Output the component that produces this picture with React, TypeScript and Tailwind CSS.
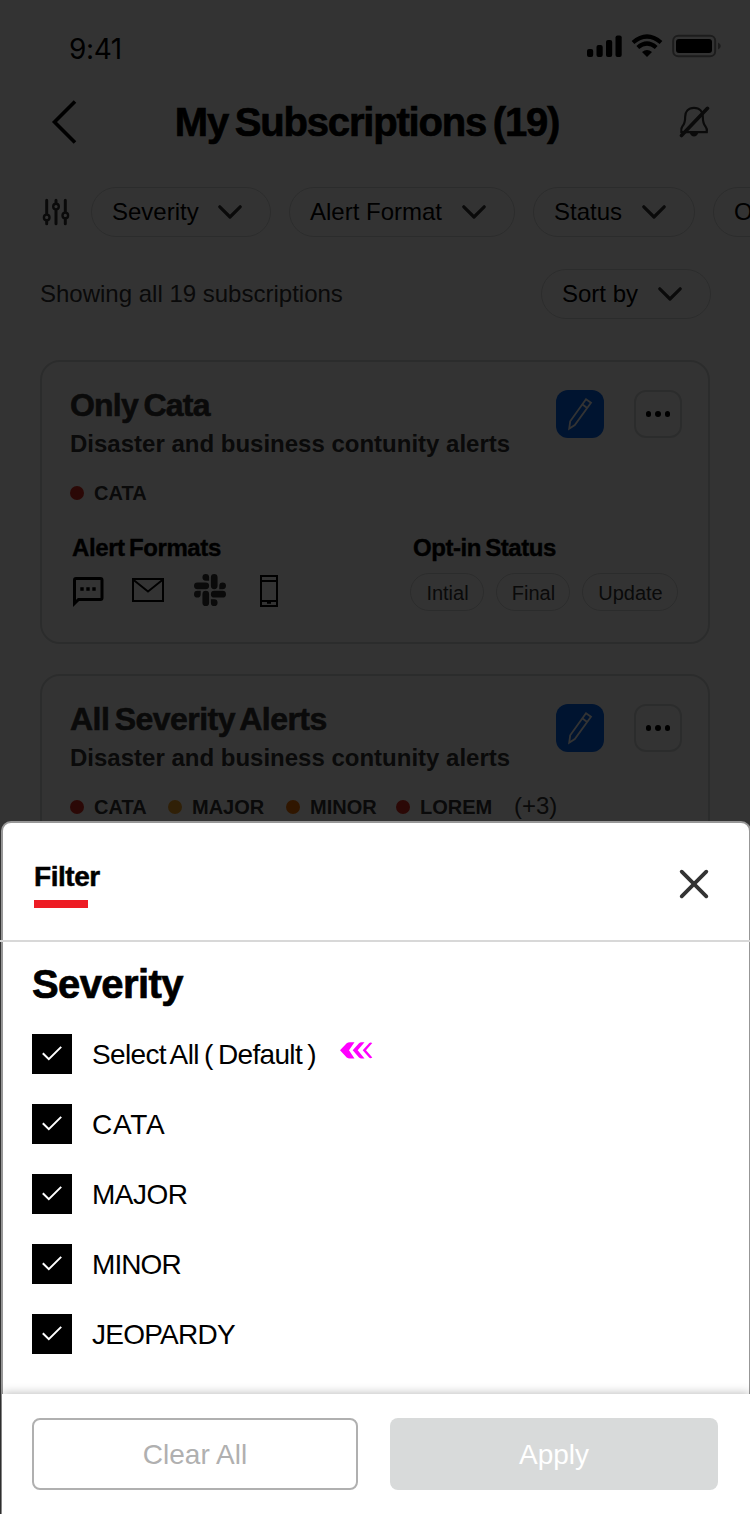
import type { ReactNode } from "react";

function Chevron() {
  return (
    <svg width="24" height="14" viewBox="0 0 24 14" className="shrink-0" fill="none" stroke="#333" strokeWidth="3.2" strokeLinecap="round" strokeLinejoin="round">
      <path d="M1.8 1.8 12 12 22.2 1.8" />
    </svg>
  );
}

function Pill({ label, className }: { label: string; className: string }) {
  return (
    <button className={`flex h-[50px] shrink-0 items-center justify-between rounded-full border border-[#d8dada] pr-7 pl-5 text-2xl whitespace-nowrap text-black ${className}`}>
      <span>{label}</span>
      <Chevron />
    </button>
  );
}

function StatusBar() {
  return (
    <div className="flex h-[72px] items-start justify-between pt-[34px] pr-[29px] pl-[69px]">
      <span className="font-['Inter'] text-[28px] leading-[31px] tracking-[-0.4px]">9:41</span>
      <svg width="134" height="24" viewBox="587 34 134 24">
        <rect x="587" y="49" width="6.2" height="8" rx="2" />
        <rect x="596.5" y="45" width="6.2" height="12" rx="2" />
        <rect x="606" y="40" width="6.2" height="17" rx="2" />
        <rect x="615.5" y="35.5" width="6.2" height="21.5" rx="2" />
        <path d="M633 42.5Q647 30.5 661 42.5" fill="none" stroke="#000" strokeWidth="4.2" />
        <path d="M637.8 47.5Q647 39.5 656.2 47.5" fill="none" stroke="#000" strokeWidth="4.2" />
        <path d="M642 52Q647 48 652 52L647 57Z" />
        <rect x="673.2" y="35.8" width="42" height="20.4" rx="5" fill="none" stroke="#8c8c8c" strokeWidth="2" />
        <rect x="676" y="39" width="36" height="14" rx="3" />
        <path d="M718 42.5Q720.8 43.5 720.8 46T718 49.5Z" fill="#8c8c8c" />
      </svg>
    </div>
  );
}

function Header() {
  return (
    <div className="flex h-[100px] items-center justify-between pr-[39px] pl-[51px]">
      <svg width="26" height="46" viewBox="0 0 26 46" fill="none" stroke="#000" strokeWidth="3.6">
        <path d="M24 2.5 3.5 23 24 43.5" />
      </svg>
      <h1 className="mr-[22px] text-[40px] leading-[48px] font-bold tracking-[-1.2px] text-black [-webkit-text-stroke:0.7px] [word-spacing:-3px]">My Subscriptions (19)</h1>
      <svg width="32" height="34" viewBox="679 105 32 34" fill="none" stroke="#333" strokeWidth="2.2">
        <path d="M694 107.8C688 107.8 685.2 112 685.2 116.5C685.2 122.5 684.5 124.2 682.3 126.5C681 128 681 130 681.3 132.2H706.8C707.2 130 706.8 128 705.5 126.5C703.5 124.2 702.8 122.5 702.8 116.5C702.8 112 700 107.8 694 107.8Z" />
        <path d="M689.5 132.5Q691 136.5 694 136.5T698.5 132.5Z" fill="#333" stroke="none" />
        <path d="M681.5 135.5 707.5 108.3" strokeWidth="3.6" strokeLinecap="round" />
      </svg>
    </div>
  );
}

function Sliders() {
  return (
    <svg width="28" height="28" viewBox="42 198 28 28" className="shrink-0" fill="none" stroke="#333" strokeWidth="3" strokeLinecap="round">
      <path d="M46.7 200.3V213.5M46.7 221.3V223.7M56 200.3V202.5M56 210.5V223.7M65.3 200.3V211.5M65.3 219.3V223.7" />
      <circle cx="46.7" cy="217.4" r="2.8" strokeWidth="2.4" />
      <circle cx="56" cy="206.6" r="2.8" strokeWidth="2.4" />
      <circle cx="65.3" cy="215.4" r="2.8" strokeWidth="2.4" />
    </svg>
  );
}

function CardHead({ title, className }: { title: string; className: string }) {
  return (
    <div className="flex justify-between pr-[26px] pl-7">
      <div className="text-[#333]">
        <h2 className={`text-[32px] leading-[38px] font-bold [-webkit-text-stroke:0.6px] ${className}`}>{title}</h2>
        <p className="mt-1 text-2xl leading-8 font-bold whitespace-nowrap">Disaster and business contunity alerts</p>
      </div>
      <div className="mt-1 flex gap-[30px]">
        <button className="flex size-12 items-center justify-center rounded-[12px] bg-[#0064f0]">
          <svg width="26" height="34" viewBox="567 397 26 34" fill="none" stroke="#fff" strokeWidth="1.8">
            <path d="M586 399.2 591 402.8 574.8 425 569.2 428.7 570.2 421.3ZM582.2 404.3 587.2 408" />
          </svg>
        </button>
        <button className="flex size-12 items-center justify-center gap-[4px] rounded-[12px] border-2 border-[#d8dada]">
          <i className="size-[5.5px] rounded-full bg-black" />
          <i className="size-[5.5px] rounded-full bg-black" />
          <i className="size-[5.5px] rounded-full bg-black" />
        </button>
      </div>
    </div>
  );
}

function Tag({ color, children, className = "" }: { color: string; children: ReactNode; className?: string }) {
  return (
    <span className={`flex shrink-0 items-center gap-[10px] text-xl font-bold text-[#333] ${className}`}>
      <i className={`size-[14px] rounded-full ${color}`} />
      {children}
    </span>
  );
}

function FormatIcons() {
  return (
    <svg width="210" height="36" viewBox="72 573 210 36" className="mt-[11px]" fill="none" stroke="#000">
      <path d="M74.5 603.5V580Q74.5 578.5 76 578.5H100.5Q102 578.5 102 580V598Q102 599.5 100.5 599.5H78.5Z" strokeWidth="3" strokeLinejoin="miter" />
      <path d="M80.3 589h3.4M86.3 589h3.4M92.3 589h3.4" strokeWidth="3.4" />
      <path d="M133 579H163V601H133ZM133 579.5 148 591.5 163 579.5" strokeWidth="2" />
      <g fill="#333" stroke="none" transform="translate(194 574) scale(1.3333)">
        <path d="M5.042 15.165a2.528 2.528 0 0 1-2.52 2.523A2.528 2.528 0 0 1 0 15.165a2.527 2.527 0 0 1 2.522-2.52h2.52v2.52zM6.313 15.165a2.527 2.527 0 0 1 2.521-2.52 2.527 2.527 0 0 1 2.521 2.52v6.313A2.528 2.528 0 0 1 8.834 24a2.528 2.528 0 0 1-2.521-2.522v-6.313zM8.834 5.042a2.528 2.528 0 0 1-2.521-2.52A2.528 2.528 0 0 1 8.834 0a2.528 2.528 0 0 1 2.521 2.522v2.52H8.834zM8.834 6.313a2.528 2.528 0 0 1 2.521 2.521 2.528 2.528 0 0 1-2.521 2.521H2.522A2.528 2.528 0 0 1 0 8.834a2.528 2.528 0 0 1 2.522-2.521h6.312zM18.956 8.834a2.528 2.528 0 0 1 2.522-2.521A2.528 2.528 0 0 1 24 8.834a2.528 2.528 0 0 1-2.522 2.521h-2.522V8.834zM17.688 8.834a2.528 2.528 0 0 1-2.523 2.521 2.527 2.527 0 0 1-2.52-2.521V2.522A2.527 2.527 0 0 1 15.165 0a2.528 2.528 0 0 1 2.523 2.522v6.312zM15.165 18.956a2.528 2.528 0 0 1 2.523 2.522A2.528 2.528 0 0 1 15.165 24a2.527 2.527 0 0 1-2.52-2.522v-2.522h2.52zM15.165 17.688a2.527 2.527 0 0 1-2.52-2.523 2.526 2.526 0 0 1 2.52-2.52h6.313A2.527 2.527 0 0 1 24 15.165a2.528 2.528 0 0 1-2.522 2.523h-6.313z" />
      </g>
      <path d="M261 576H277V606H261ZM261 581H277M261 601H277M267 602.7H271" strokeWidth="2" />
    </svg>
  );
}

function StatusChip({ label, className }: { label: string; className: string }) {
  return (
    <span className={`flex h-[38px] items-center justify-center rounded-full border border-[#d8dada] pt-0.5 pl-px text-xl text-[#333] ${className}`}>{label}</span>
  );
}

function Page() {
  return (
    <div className="h-[1514px] w-[750px] overflow-hidden bg-white">
      <StatusBar />
      <Header />
      <div className="mt-[15px] flex items-center pl-[42px]">
        <Sliders />
        <div className="ml-[21px] flex gap-[18px]">
          <Pill label="Severity" className="w-[180px]" />
          <Pill label="Alert Format" className="w-[226px]" />
          <Pill label="Status" className="w-[162px]" />
          <Pill label="Opt-in Status" className="w-[240px]" />
        </div>
      </div>
      <div className="mt-8 flex items-center justify-between pr-[39px] pl-10">
        <span className="text-2xl text-[#333]">Showing all 19 subscriptions</span>
        <Pill label="Sort by" className="w-[170px]" />
      </div>
      <section className="mx-10 mt-[41px] h-[284px] rounded-[20px] border-2 border-[#d8dada] pt-6">
        <CardHead title="Only Cata" className="tracking-[-0.8px] [word-spacing:-2.5px]" />
        <div className="mt-[21px] flex h-6 pl-7">
          <Tag color="bg-[#d52b1e]">CATA</Tag>
        </div>
        <div className="mt-[29px] flex text-black">
          <div className="w-[368px] pl-[30px]">
            <h3 className="text-2xl leading-7 font-bold tracking-[-0.4px] [-webkit-text-stroke:0.4px] [word-spacing:-2px]">Alert Formats</h3>
            <FormatIcons />
          </div>
          <div>
            <h3 className="pl-[3px] text-2xl leading-7 font-bold tracking-[-0.45px] [-webkit-text-stroke:0.4px] [word-spacing:-2px]">Opt-in Status</h3>
            <div className="mt-[11px] flex gap-3">
              <StatusChip label="Intial" className="w-[74px]" />
              <StatusChip label="Final" className="w-[74px]" />
              <StatusChip label="Update" className="w-[96px]" />
            </div>
          </div>
        </div>
      </section>
      <section className="mx-10 mt-[30px] h-[284px] rounded-[20px] border-2 border-[#d8dada] pt-6">
        <CardHead title="All Severity Alerts" className="tracking-[-0.55px] [word-spacing:-2.8px]" />
        <div className="mt-[21px] flex h-6 pl-7">
          <Tag color="bg-[#d52b1e]" className="w-[98px]">CATA</Tag>
          <Tag color="bg-[#ed9f25]" className="w-[118px]">MAJOR</Tag>
          <Tag color="bg-[#ed7000]" className="w-[110px]">MINOR</Tag>
          <Tag color="bg-[#d52b1e]" className="w-[118px]">LOREM</Tag>
          <span className="text-2xl leading-[22px] text-[#333]">(+3)</span>
        </div>
      </section>
    </div>
  );
}

function CheckRow({ label, children, className }: { label: string; children?: ReactNode; className: string }) {
  return (
    <label className="flex h-10 items-center">
      <span className="flex size-10 items-center justify-center bg-black pb-[2px]">
        <svg width="20" height="15" viewBox="0 0 20 15" fill="none" stroke="#fff" strokeWidth="2">
          <path d="M.8 7.2 6.8 13.2 19.2.9" />
        </svg>
      </span>
      <span className={`ml-5 pt-0.5 text-[28px] leading-8 whitespace-pre ${className}`}>{label}</span>
      {children}
    </label>
  );
}

function FilterSheet() {
  return (
    <div className="absolute top-[821px] left-px flex h-[693px] w-[750px] flex-col rounded-t-[10px] border-2 border-[#979797] bg-white">
      <div className="-ml-[3px] flex h-[119px] w-[753px] shrink-0 items-start justify-between border-b-2 border-[#d8d8d8] pr-[44px] pl-[34px]">
        <div className="pt-[38px]">
          <h2 className="text-[28px] leading-8 font-bold tracking-[-0.45px] [-webkit-text-stroke:0.5px]">Filter</h2>
          <div className="mt-[7px] h-2 w-[54px] bg-[#ed1c24]" />
        </div>
        <svg width="30" height="30" viewBox="0 0 30 30" className="mt-[46px]" fill="none" stroke="#333" strokeWidth="3.8" strokeLinecap="round">
          <path d="M2.7 2.7 27.3 27.3M27.3 2.7 2.7 27.3" />
        </svg>
      </div>
      <div className="flex flex-col pt-[18px] pl-[29px]">
        <h2 className="text-[40px] leading-[48px] font-bold tracking-[-0.6px] [-webkit-text-stroke:0.7px]">Severity</h2>
        <div className="mt-[26px] flex flex-col gap-[30px]">
          <CheckRow label="Select All ( Default )" className="tracking-[-0.65px] [word-spacing:-1.9px]">
            <svg width="34" height="17" viewBox="0 0 34 17" className="-mt-2 ml-[24px] shrink-0" fill="#f0f">
              <path d="M0 8.3 6.7 1.2Q8 .2 10 .2H14.5L9 8.3 14.5 16.4H10Q8 16.4 6.7 15.4ZM12.7 8.3 19 1.2Q20 .2 21.5 .2H24.5L17.7 8.3 24.5 16.4H21.5Q20 16.4 19 15.4ZM22.7 8.3 29.3.9Q30.5 0 32.3 1L26 8.3 32.3 15.6Q30.5 16.6 29.3 15.7Z" />
            </svg>
          </CheckRow>
          <CheckRow label="CATA" className="tracking-[0.7px]" />
          <CheckRow label="MAJOR" className="tracking-[-0.5px]" />
          <CheckRow label="MINOR" className="tracking-[-0.9px]" />
          <CheckRow label="JEOPARDY" className="tracking-[-0.75px]" />
        </div>
      </div>
      <div className="-ml-px mt-[40px] flex h-[120px] w-[748px] shrink-0 gap-8 bg-white pt-6 pl-[30px] text-[28px] shadow-[0_0_10px_rgba(0,0,0,0.3)]">
        <button className="h-[72px] w-[326px] rounded-[8px] border-2 border-[#b0b0b0] pt-0.5 text-[#b0b0b0]">Clear All</button>
        <button className="h-[72px] w-[328px] rounded-[8px] bg-[#d8dada] pt-0.5 text-white">Apply</button>
      </div>
    </div>
  );
}

export default function App() {
  return (
    <div className="relative h-[1514px] w-[750px] overflow-hidden font-['Liberation_Sans',sans-serif] text-black">
      <Page />
      <div className="absolute inset-0 bg-black/80" />
      <FilterSheet />
    </div>
  );
}
